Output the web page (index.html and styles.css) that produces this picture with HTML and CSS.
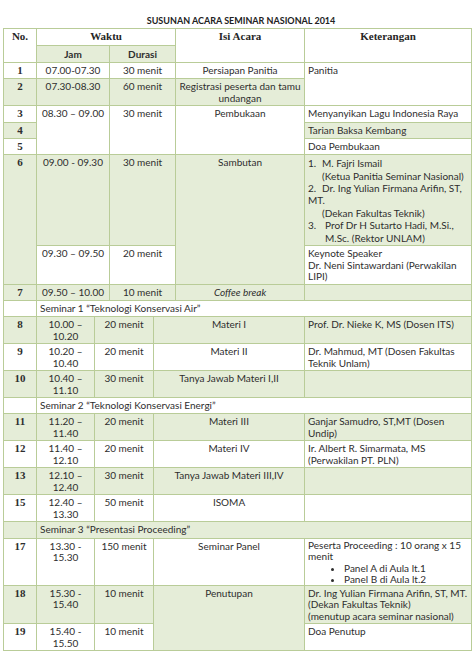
FILE: index.html
```html
<!DOCTYPE html>
<html>
<head>
<meta charset="utf-8">
<link rel="stylesheet" href="styles.css">
</head>
<body>
<div class="page">
  <h1 class="title">SUSUNAN ACARA SEMINAR NASIONAL 2014</h1>
  <table class="agenda">
    <colgroup>
      <col class="c-no"><col class="c-a"><col class="c-b"><col class="c-c"><col class="c-d"><col class="c-e"><col class="c-ket">
    </colgroup>
    <tr class="head">
      <th rowspan="2" class="h-serif">No.</th>
      <th colspan="4" class="h-serif">Waktu</th>
      <th rowspan="2" class="h-serif">Isi Acara</th>
      <th rowspan="2" class="h-serif">Keterangan</th>
    </tr>
    <tr class="head">
      <th colspan="2" class="sub g">Jam</th>
      <th colspan="2" class="sub g">Durasi</th>
    </tr>

    <tr>
      <td class="no">1</td>
      <td colspan="2" class="ctr">07.00-07.30</td>
      <td colspan="2" class="ctr">30 menit</td>
      <td class="ctr">Persiapan Panitia</td>
      <td rowspan="2" class="ket">Panitia</td>
    </tr>
    <tr class="g">
      <td class="no">2</td>
      <td colspan="2" class="ctr">07.30-08.30</td>
      <td colspan="2" class="ctr">60 menit</td>
      <td class="ctr">Registrasi peserta dan tamu undangan</td>
    </tr>
    <tr>
      <td class="no">3</td>
      <td colspan="2" rowspan="3" class="ctr">08.30 – 09.00</td>
      <td colspan="2" rowspan="3" class="ctr">30 menit</td>
      <td rowspan="3" class="ctr">Pembukaan</td>
      <td class="ket">Menyanyikan Lagu Indonesia Raya</td>
    </tr>
    <tr>
      <td class="no g">4</td>
      <td class="ket g">Tarian Baksa Kembang</td>
    </tr>
    <tr>
      <td class="no">5</td>
      <td class="ket">Doa Pembukaan</td>
    </tr>
    <tr class="g">
      <td rowspan="2" class="no">6</td>
      <td colspan="2" class="ctr">09.00 - 09.30</td>
      <td colspan="2" class="ctr">30 menit</td>
      <td rowspan="2" class="ctr">Sambutan</td>
      <td class="ket list">
        <div class="li"><span class="num">1.</span><span>M. Fajri Ismail<br>(Ketua Panitia Seminar Nasional)</span></div>
        <div class="li"><span class="num">2.</span><span>Dr. Ing Yulian Firmana Arifin, ST,</span></div>
        <div>MT.</div>
        <div class="ind">(Dekan Fakultas Teknik)</div>
        <div class="li"><span class="num n3">3.</span><span>Prof Dr H Sutarto Hadi, M.Si.,<br>M.Sc. (Rektor UNLAM)</span></div>
      </td>
    </tr>
    <tr>
      <td colspan="2" class="ctr">09.30 – 09.50</td>
      <td colspan="2" class="ctr">20 menit</td>
      <td class="ket">Keynote Speaker<br>Dr. Neni Sintawardani (Perwakilan LIPI)</td>
    </tr>
    <tr class="g">
      <td class="no">7</td>
      <td colspan="2" class="ctr">09.50 – 10.00</td>
      <td colspan="2" class="ctr">10 menit</td>
      <td class="ctr"><em>Coffee break</em></td>
      <td class="ket"></td>
    </tr>
    <tr>
      <td class="no"></td>
      <td colspan="6" class="sem">Seminar 1 “Teknologi Konservasi Air”</td>
    </tr>
    <tr class="g">
      <td class="no">8</td>
      <td class="ctr">10.00 –<br>10.20</td>
      <td colspan="2" class="ctr">20 menit</td>
      <td colspan="2" class="ctr">Materi I</td>
      <td class="ket">Prof. Dr. Nieke K, MS (Dosen ITS)</td>
    </tr>
    <tr>
      <td class="no">9</td>
      <td class="ctr">10.20 –<br>10.40</td>
      <td colspan="2" class="ctr">20 menit</td>
      <td colspan="2" class="ctr">Materi II</td>
      <td class="ket">Dr. Mahmud, MT (Dosen Fakultas Teknik Unlam)</td>
    </tr>
    <tr class="g">
      <td class="no">10</td>
      <td class="ctr">10.40 –<br>11.10</td>
      <td colspan="2" class="ctr">30 menit</td>
      <td colspan="2" class="ctr">Tanya Jawab Materi I,II</td>
      <td class="ket"></td>
    </tr>
    <tr>
      <td class="no"></td>
      <td colspan="6" class="sem">Seminar 2 “Teknologi Konservasi Energi”</td>
    </tr>
    <tr class="g">
      <td class="no">11</td>
      <td class="ctr">11.20 –<br>11.40</td>
      <td colspan="2" class="ctr">20 menit</td>
      <td colspan="2" class="ctr">Materi III</td>
      <td class="ket">Ganjar Samudro, ST,MT (Dosen Undip)</td>
    </tr>
    <tr>
      <td class="no">12</td>
      <td class="ctr">11.40 –<br>12.10</td>
      <td colspan="2" class="ctr">20 menit</td>
      <td colspan="2" class="ctr">Materi IV</td>
      <td class="ket">Ir. Albert R. Simarmata, MS<br>(Perwakilan PT. PLN)</td>
    </tr>
    <tr class="g">
      <td class="no">13</td>
      <td class="ctr">12.10 –<br>12.40</td>
      <td colspan="2" class="ctr">30 menit</td>
      <td colspan="2" class="ctr">Tanya Jawab Materi III,IV</td>
      <td class="ket"></td>
    </tr>
    <tr>
      <td class="no">15</td>
      <td class="ctr">12.40 –<br>13.30</td>
      <td colspan="2" class="ctr">50 menit</td>
      <td colspan="2" class="ctr">ISOMA</td>
      <td class="ket"></td>
    </tr>
    <tr class="g">
      <td class="no"></td>
      <td colspan="6" class="sem">Seminar 3 “Presentasi Proceeding”</td>
    </tr>
    <tr>
      <td class="no">17</td>
      <td class="ctr">13.30 -<br>15.30</td>
      <td colspan="2" class="ctr">150 menit</td>
      <td colspan="2" class="ctr">Seminar Panel</td>
      <td class="ket tight">Peserta Proceeding : 10 orang x 15 menit
        <ul class="bul">
          <li>Panel A di Aula lt.1</li>
          <li>Panel B di Aula lt.2</li>
        </ul>
      </td>
    </tr>
    <tr class="g">
      <td class="no">18</td>
      <td class="ctr">15.30 -<br>15.40</td>
      <td colspan="2" class="ctr">10 menit</td>
      <td colspan="2" rowspan="2" class="ctr">Penutupan</td>
      <td class="ket">Dr. Ing Yulian Firmana Arifin, ST, MT.<br>(Dekan Fakultas Teknik)<br>(menutup acara seminar nasional)</td>
    </tr>
    <tr>
      <td class="no">19</td>
      <td class="ctr">15.40 -<br>15.50</td>
      <td colspan="2" class="ctr">10 menit</td>
      <td class="ket">Doa Penutup</td>
    </tr>
  </table>
</div>
</body>
</html>
```

FILE: styles.css
```css
html, body {
  margin: 0;
  padding: 0;
  background: #ffffff;
}
.page {
  width: 474px;
  padding-top: 14px;
  font-family: Lato, "Open Sans", sans-serif;
  color: #2e2e2e;
}
.title {
  margin: 0 0 1px 0;
  font-size: 9px;
  font-weight: bold;
  text-align: center;
  line-height: 13px;
  padding-left: 8px;
  color: #222;
}
.agenda {
  margin-left: 3px;
  width: 468px;
  table-layout: fixed;
  border-collapse: collapse;
  font-size: 10px;
  line-height: 11.5px;
}
.c-no { width: 33px; }
.c-a { width: 58px; }
.c-b { width: 15px; }
.c-c { width: 44px; }
.c-d { width: 22px; }
.c-e { width: 129px; }
.c-ket { width: 167px; }

.agenda tr { height: 16.3px; }
.agenda tr.head { height: 17px; }

.agenda th, .agenda td {
  border: 1px solid #b9cc98;
  padding: 2px 3px 1px 3px;
  vertical-align: top;
  font-weight: normal;
}
.g, tr.g > td {
  background: #e5edd8;
}
.agenda th.h-serif {
  font-family: "Liberation Serif", "DejaVu Serif", serif;
  font-weight: bold;
  font-size: 11px;
  text-align: center;
  color: #262626;
}
.agenda th.sub {
  font-weight: bold;
  text-align: center;
  padding-top: 3px;
}
.agenda td.no {
  font-family: "Liberation Serif", "DejaVu Serif", serif;
  font-weight: bold;
  font-size: 11px;
  text-align: center;
}
.ctr { text-align: center; }
.ket { text-align: left; }
.agenda td.tight { padding-top: 1px; padding-bottom: 0; }
.sem { text-align: left; padding-left: 5px; }
.list { line-height: 12.4px; }
.li {
  display: flex;
}
.li .num {
  width: 14px;
  flex: none;
}
.li .num.n3 { width: 17px; }
.ind { padding-left: 14px; }
.bul {
  margin: 0;
  padding-left: 36px;
  list-style: disc;
  line-height: 11px;
}
```
